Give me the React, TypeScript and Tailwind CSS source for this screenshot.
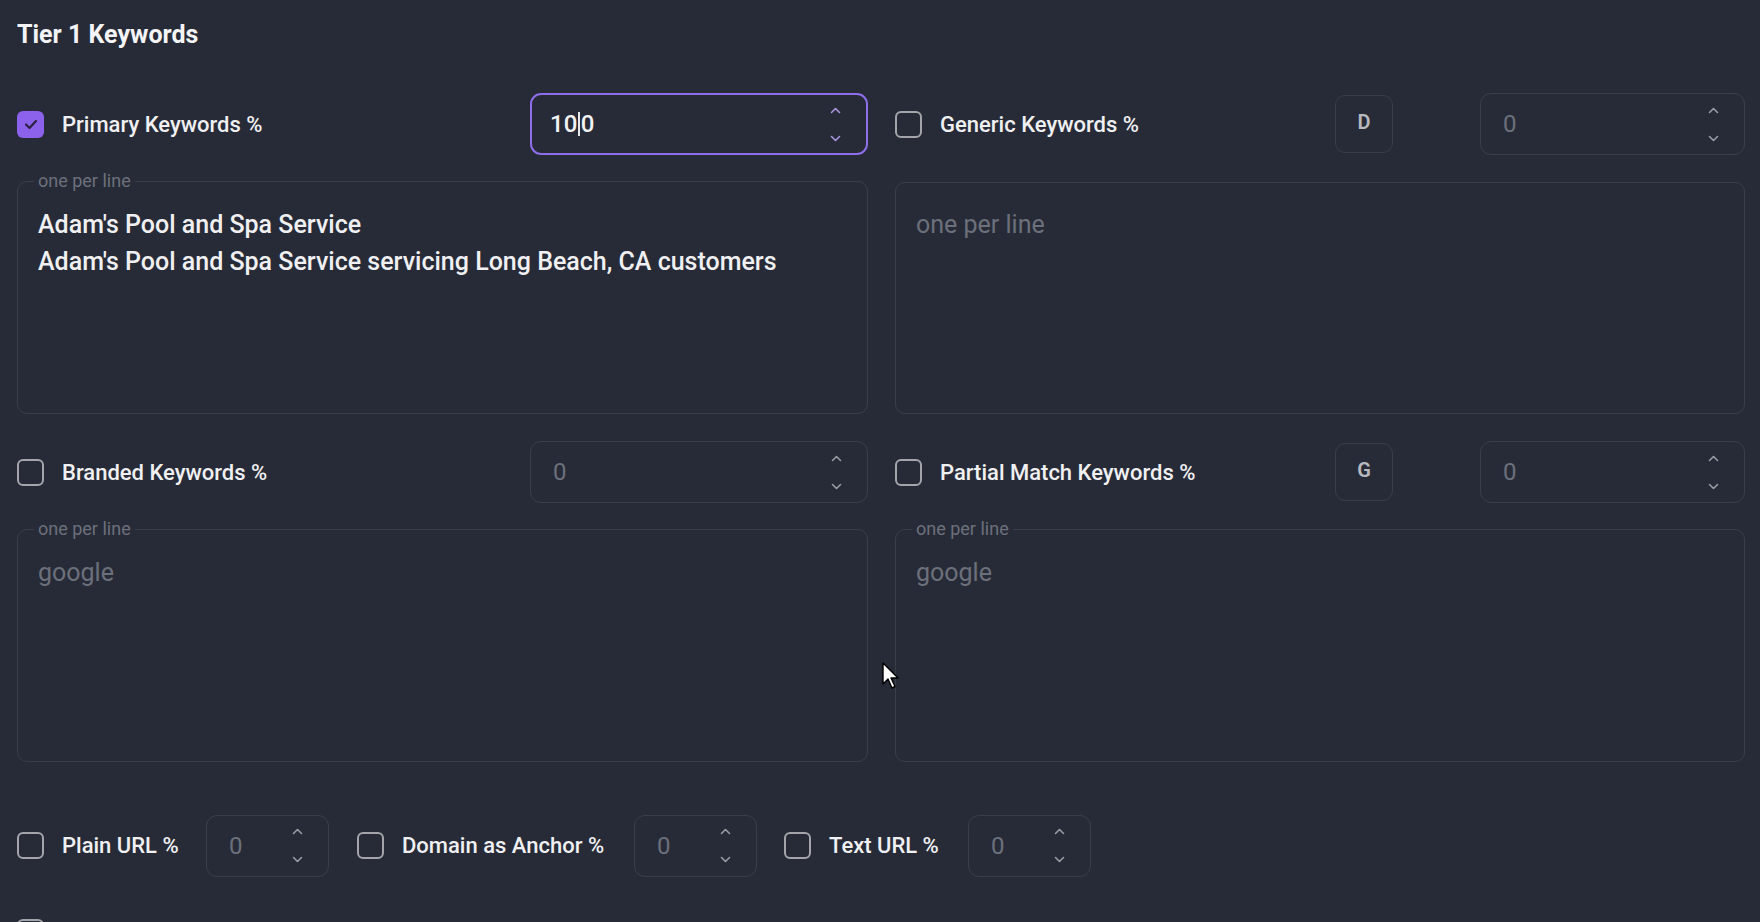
import React from "react";

const font = "font-['Roboto','Liberation_Sans',sans-serif]";

function Checkbox({ checked = false }: { checked?: boolean }) {
  if (checked) {
    return (
      <span className="flex h-[27px] w-[27px] flex-shrink-0 items-center justify-center rounded-[6px] bg-[#8c62ec]">
        <svg width="14" height="11" viewBox="0 0 14 11" fill="none">
          <path d="M2 5.5l3.5 3.5L12 2" stroke="#2a2240" strokeWidth="2.2" strokeLinecap="round" strokeLinejoin="round" />
        </svg>
      </span>
    );
  }
  return <span className="block h-[27px] w-[27px] flex-shrink-0 rounded-[6px] border-2 border-[#a3a5ab]" />;
}

function Spinner({ focused = false }: { focused?: boolean }) {
  const c = focused ? "#a996e0" : "#9a9ca4";
  return (
    <div className="flex flex-col items-center gap-[21px]">
      <svg width="11" height="7" viewBox="0 0 11 7" fill="none">
        <path d="M1.5 5.5l4-4 4 4" stroke={c} strokeWidth="1.6" strokeLinecap="round" strokeLinejoin="round" />
      </svg>
      <svg width="11" height="7" viewBox="0 0 11 7" fill="none">
        <path d="M1.5 1.5l4 4 4-4" stroke={c} strokeWidth="1.6" strokeLinecap="round" strokeLinejoin="round" />
      </svg>
    </div>
  );
}

function NumberBox({ value, focused = false, className = "" }: { value: string; focused?: boolean; className?: string }) {
  return (
    <div
      className={`flex h-[62px] flex-shrink-0 items-center justify-between rounded-[11px] pr-[25px] ${
        focused ? "border-2 border-[#8d6ee8] pl-[18px]" : "border border-[#3a3e49] pl-[22px]"
      } ${className}`}
    >
      {focused ? (
        <span className="flex items-center text-[24px] font-medium text-[#f2f2f4]">
          10<span className="mx-[1px] h-[24px] w-[1.5px] bg-[#e8e8ea]" />0
        </span>
      ) : (
        <span className="text-[24px] text-[#6c707b]">{value}</span>
      )}
      <Spinner focused={focused} />
    </div>
  );
}

function LetterButton({ letter }: { letter: string }) {
  return (
    <div className="flex h-[58px] w-[58px] flex-shrink-0 items-center justify-center rounded-[10px] border border-[#3a3e49] pb-[5px] text-[20px] font-semibold text-[#b7b9bf]">
      {letter}
    </div>
  );
}

function Label({ text, className = "" }: { text: string; className?: string }) {
  return <span className={`ml-[18px] text-[22px] font-medium text-[#f0f0f2] ${className}`}>{text}</span>;
}

function KeywordArea({ lines, placeholder, legend = true }: { lines?: string[]; placeholder?: string; legend?: boolean }) {
  const body = lines ? (
    lines.map((l) => (
      <div key={l} className="text-[25px] font-medium leading-[37px] text-[#f0f0f2]">
        {l}
      </div>
    ))
  ) : (
    <div className="text-[25px] leading-[37px] text-[#6c707b]">{placeholder}</div>
  );

  if (!legend) {
    return (
      <div className="mt-[27px] h-[232px] rounded-[10px] border border-[#3a3e49] px-[20px] pt-[23px]">{body}</div>
    );
  }
  return (
    <fieldset className="mt-[16px] h-[243px] rounded-[10px] border border-[#3a3e49] px-[20px] pt-[15px]">
      <legend className="ml-[-4px] px-[4px] text-[18px] leading-[20px] text-[#6c707b]">one per line</legend>
      {body}
    </fieldset>
  );
}

export default function App() {
  return (
    <div className={`relative h-[922px] w-full overflow-hidden bg-[#272b37] pl-[17px] pr-[15px] pt-[20px] text-white ${font}`}>
      <h2 className="text-[25px] font-bold leading-[30px] text-[#f4f4f6]">Tier 1 Keywords</h2>

      <div className="mt-[43px] grid grid-cols-[851px_850px] gap-x-[27px] gap-y-[27px]">
        {/* Primary */}
        <div>
          <div className="flex h-[62px] items-center">
            <Checkbox checked />
            <Label text="Primary Keywords %" className="flex-1" />
            <NumberBox value="100" focused className="w-[338px]" />
          </div>
          <KeywordArea
            lines={["Adam's Pool and Spa Service", "Adam's Pool and Spa Service servicing Long Beach, CA customers"]}
          />
        </div>

        {/* Generic */}
        <div>
          <div className="flex h-[62px] items-center">
            <Checkbox />
            <Label text="Generic Keywords %" className="flex-1" />
            <LetterButton letter="D" />
            <NumberBox value="0" className="ml-[87px] w-[265px]" />
          </div>
          <KeywordArea placeholder="one per line" legend={false} />
        </div>

        {/* Branded */}
        <div>
          <div className="flex h-[62px] items-center">
            <Checkbox />
            <Label text="Branded Keywords %" className="flex-1" />
            <NumberBox value="0" className="w-[338px]" />
          </div>
          <KeywordArea placeholder="google" />
        </div>

        {/* Partial match */}
        <div>
          <div className="flex h-[62px] items-center">
            <Checkbox />
            <Label text="Partial Match Keywords %" className="flex-1" />
            <LetterButton letter="G" />
            <NumberBox value="0" className="ml-[87px] w-[265px]" />
          </div>
          <KeywordArea placeholder="google" />
        </div>
      </div>

      {/* URL anchors */}
      <div className="mt-[53px] flex h-[61px] items-center">
        <Checkbox />
        <Label text="Plain URL %" className="w-[118px] whitespace-nowrap" />
        <NumberBox value="0" className="ml-[26px] w-[123px]" />
        <span className="ml-[28px]">
          <Checkbox />
        </span>
        <Label text="Domain as Anchor %" className="w-[205px] whitespace-nowrap" />
        <NumberBox value="0" className="ml-[27px] w-[123px]" />
        <span className="ml-[27px]">
          <Checkbox />
        </span>
        <Label text="Text URL %" className="w-[112px] whitespace-nowrap" />
        <NumberBox value="0" className="ml-[27px] w-[123px]" />
      </div>

      <div className="mt-[43px] flex items-center">
        <Checkbox />
      </div>

      {/* mouse pointer */}
      <svg className="absolute left-[882px] top-[662px]" width="20" height="28" viewBox="0 0 20 28">
        <path d="M1 1v21l5-5 4 9 3-1.5-4-8.5h7z" fill="#fff" stroke="#000" strokeWidth="1.4" strokeLinejoin="round" />
      </svg>
    </div>
  );
}
